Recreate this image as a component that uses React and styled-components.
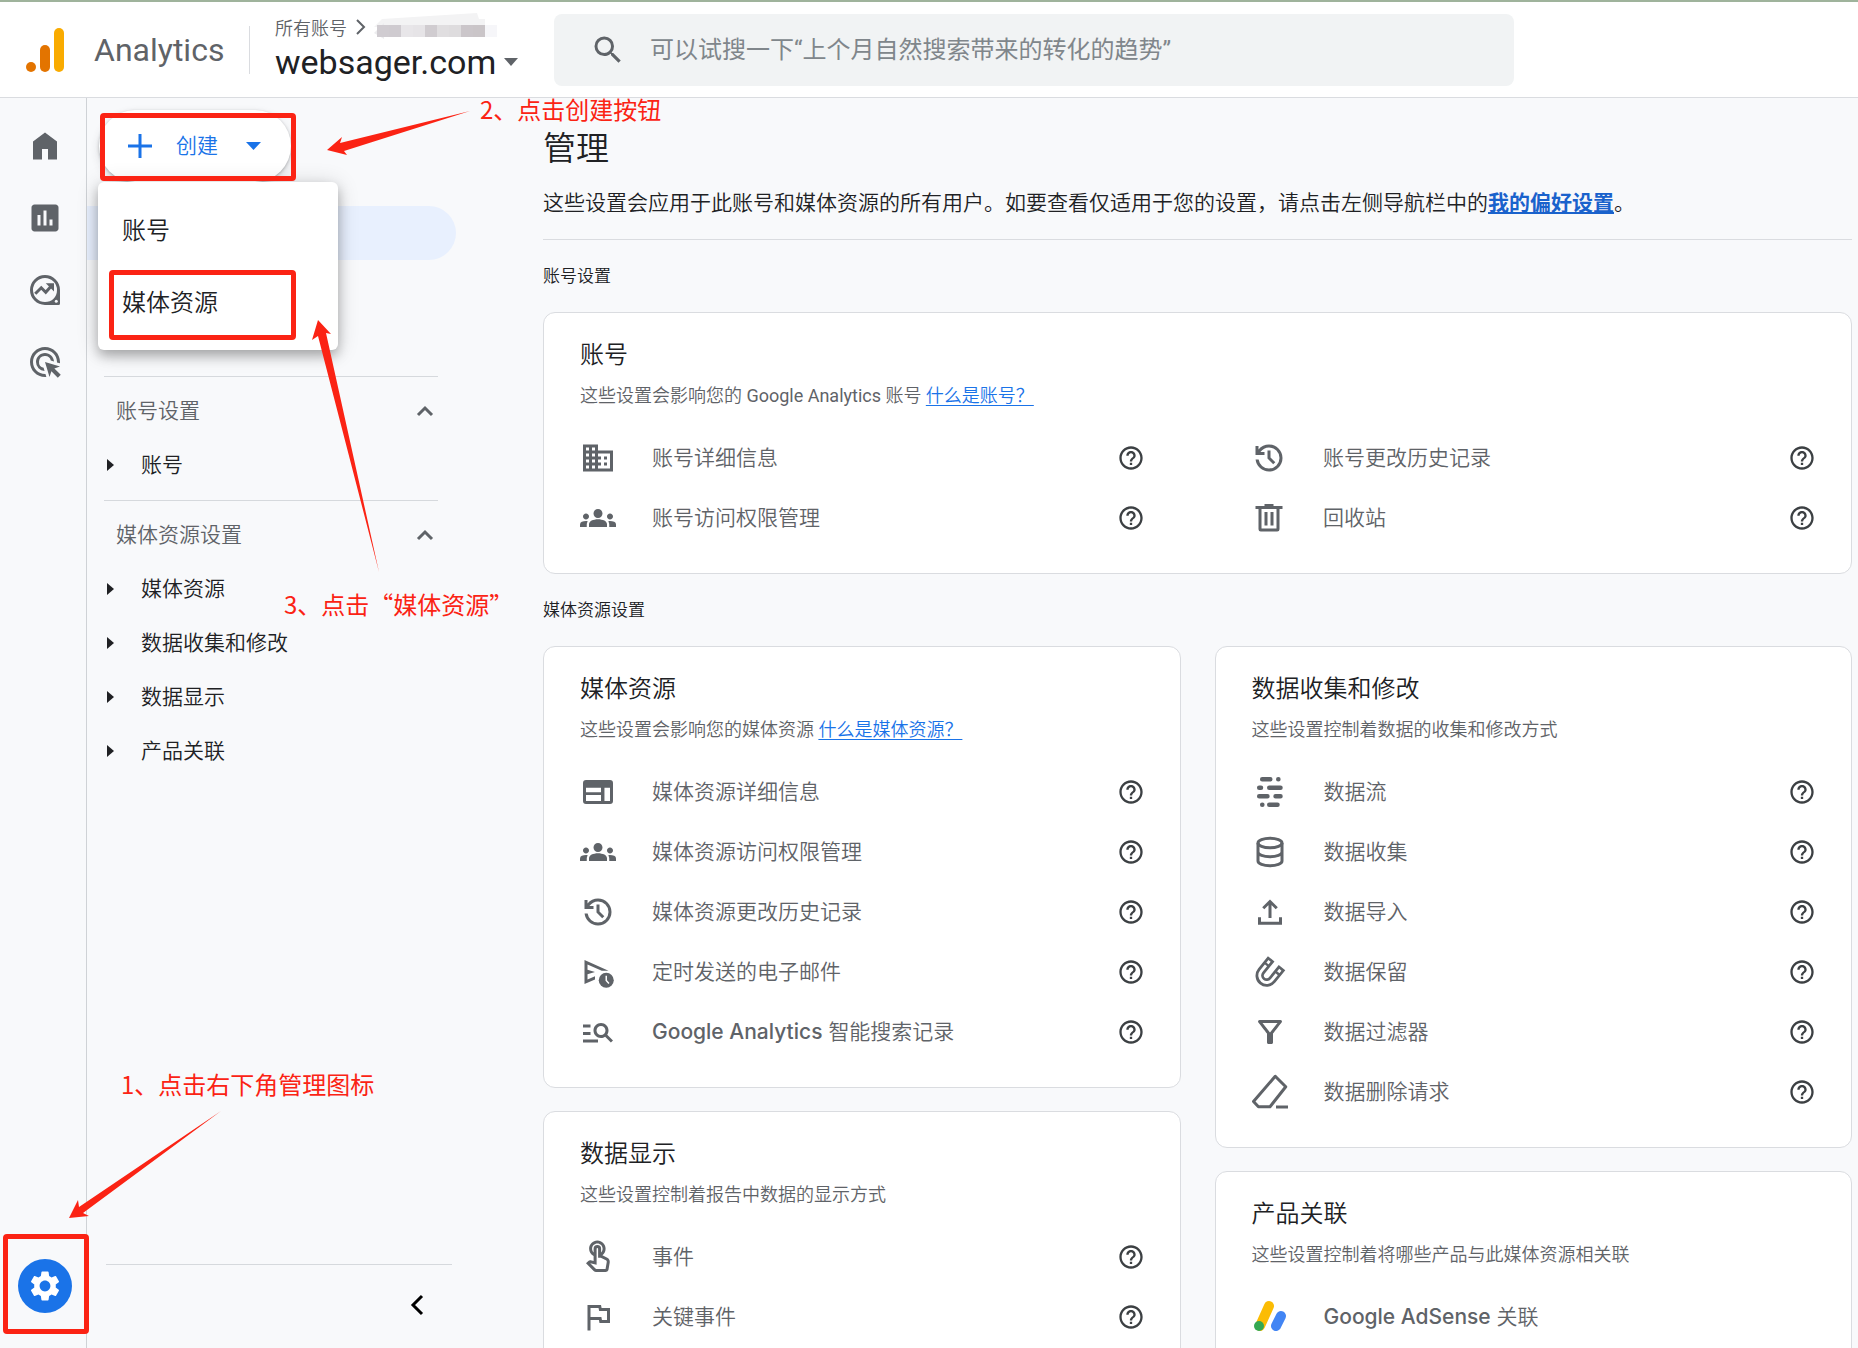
import React from "react";
import styled, { createGlobalStyle } from "styled-components";
import {
  MdAdsClick, MdAssessment, MdBusiness, MdGroups, MdHelpOutline, MdManageSearch,
  MdOutlineFilterAlt, MdOutlineFlag, MdOutlineTouchApp, MdSearch, MdSettings,
} from "react-icons/md";

const cjk = `"Noto Sans CJK SC", sans-serif`;
const body = `Roboto, ${cjk}`;
const display = `Inter, ${cjk}`;
const red = "#fb2314";

const GlobalStyle = createGlobalStyle`
  *, *::before, *::after { box-sizing: border-box; }
  body { margin: 0; background: #f8f9fb; font-family: ${body}; color: #202124; }
  h1, h2, h3, p, ul { margin: 0; padding: 0; font-weight: 400; }
  ul { list-style: none; }
  button { border: 0; padding: 0; background: none; font: inherit; color: inherit; text-align: left; cursor: pointer; }
  svg { display: block; flex: none; }
`;

const Page = styled.div`
  position: relative;
  display: flex;
  flex-direction: column;
  height: 100vh;
  overflow: hidden;
  border-top: 2px solid #9fb39c;
`;

/* ---------- top bar ---------- */

const TopBar = styled.header`
  display: flex;
  align-items: center;
  flex: none;
  height: 96px;
  padding-left: 26px;
  background: #fff;
  border-bottom: 1px solid #dadce0;
`;

const Brand = styled.a`
  display: flex;
  align-items: center;
  gap: 30px;
  height: 48px;
  width: 224px;
  border-right: 1px solid #dadce0;
  color: #5f6368;
  font: 400 32px/40px ${body};
  text-decoration: none;
`;

const Account = styled.div`
  display: flex;
  flex-direction: column;
  width: 304px;
  padding: 0 0 4px 25px;
`;

const Crumb = styled.div`
  display: flex;
  align-items: center;
  gap: 8px;
  height: 28px;
  padding-bottom: 4px;
  color: #5f6368;
  font-size: 18px;
  font-weight: 350;
`;

const PropertyPicker = styled.button`
  display: flex;
  align-items: center;
  gap: 8px;
  color: #202124;
  font: 400 34px/38px ${body};
  & > svg { color: #5f6368; }
`;

const SearchBox = styled.label`
  display: flex;
  align-items: center;
  gap: 24px;
  flex: 0 1 960px;
  height: 72px;
  margin-right: 24px;
  padding: 0 36px;
  border-radius: 8px;
  background: #f1f3f4;
  color: #5f6368;
`;

const SearchInput = styled.input`
  flex: 1;
  min-width: 0;
  border: 0;
  padding: 0;
  outline: 0;
  background: none;
  font: 400 24px/36px ${body};
  color: #202124;
  &::placeholder { color: #80868b; opacity: 1; }
`;

/* ---------- columns ---------- */

const Columns = styled.div`
  display: flex;
  flex: 1;
  min-height: 0;
`;

const Rail = styled.nav`
  display: flex;
  flex-direction: column;
  align-items: center;
  justify-content: space-between;
  flex: none;
  width: 87px;
  padding: 12px 0 26px 3px;
  border-right: 1px solid #cfd2d6;
  color: #5f6368;
`;

const RailGroup = styled.div`
  display: flex;
  flex-direction: column;
`;

const RailButton = styled.button`
  display: grid;
  place-items: center;
  width: 72px;
  height: 72px;
`;

const AdminButton = styled(RailButton)`
  & > span {
    display: grid;
    place-items: center;
    width: 54px;
    height: 54px;
    border-radius: 50%;
    background: #1a73e8;
    color: #fff;
  }
`;

const SidePanel = styled.aside`
  display: flex;
  flex-direction: column;
  flex: none;
  width: 456px;
`;

const CreateArea = styled.div`
  position: relative;
  padding: 12px 12px 0;
`;

const CreateButton = styled.button`
  display: flex;
  align-items: center;
  gap: 20px;
  width: 192px;
  height: 72px;
  padding: 0 25px;
  border-radius: 36px;
  background: #fff;
  box-shadow: 0 1px 3px rgba(60, 64, 67, 0.35), 0 4px 10px rgba(60, 64, 67, 0.16);
  color: #1a73e8;
`;

const CreateMenu = styled.ul`
  position: absolute;
  top: 84px;
  left: 11px;
  z-index: 2;
  width: 240px;
  padding: 12px 0;
  border-radius: 6px;
  background: #fff;
  box-shadow: 0 6px 12px rgba(0, 0, 0, 0.26), 0 2px 22px rgba(0, 0, 0, 0.16);
`;

const CreateMenuItem = styled.button`
  display: block;
  width: 100%;
  padding: 0 24px 3px;
  font: 350 24px/69px ${cjk};
`;

const NavList = styled.div`
  display: flex;
  flex-direction: column;
  flex: 1;
  min-height: 0;
  padding-top: 24px;
`;

const CurrentRow = styled.div`
  width: 369px;
  height: 54px;
  margin-bottom: 116px;
  border-radius: 0 27px 27px 0;
  background: #e8f0fe;
`;

const NavSection = styled.section`
  width: 334px;
  margin-left: 17px;
  padding: 7px 0 8px;
  border-top: 1px solid #d6d9dd;
`;

const NavLabel = styled.span`
  padding-bottom: 4px;
  font: 350 21px/32px ${cjk};
`;

const SectionToggle = styled.button`
  display: flex;
  align-items: center;
  justify-content: space-between;
  width: 100%;
  height: 54px;
  padding: 0 4px 0 12px;
  color: #5f6368;
`;

const TreeItem = styled.button`
  display: flex;
  align-items: center;
  gap: 27px;
  width: 100%;
  height: 54px;
  padding-left: 3px;
`;

const PanelFooter = styled.div`
  display: flex;
  justify-content: flex-end;
  width: 346px;
  margin-left: 19px;
  padding: 22px 17px 25px 0;
  border-top: 1px solid #d6d9dd;
`;

const CollapseButton = styled.button`
  display: grid;
  place-items: center;
  width: 36px;
  height: 36px;
  color: #000;
`;

/* ---------- main ---------- */

const Main = styled.main`
  flex: 1;
  min-width: 0;
  padding: 28px 6px 24px 0;
  overflow: hidden;
`;

const Title = styled.h1`
  font: 350 33px/40px ${cjk};
`;

const Intro = styled.p`
  padding: 23px 0 22px;
  border-bottom: 1px solid #dadce0;
  font-size: 21px;
  font-weight: 350;
  line-height: 28px;
`;

const IntroLink = styled.a`
  color: #1a62cc;
  font-weight: 700;
`;

const GroupLabel = styled.h2`
  margin: 24px 0;
  font-size: 17px;
  font-weight: 350;
  line-height: 24px;
`;

const CardColumns = styled.div`
  display: grid;
  grid-template-columns: 1fr 1fr;
  align-items: start;
  gap: 34px;
`;

const CardStack = styled.div`
  display: flex;
  flex-direction: column;
  gap: 23px;
`;

const Card = styled.section`
  padding: 24px 35px 25px 36px;
  border: 1px solid #dadce0;
  border-radius: 12px;
  background: #fff;
`;

const CardTitle = styled.h3`
  font: 350 24px/32px ${cjk};
`;

const CardText = styled.p`
  margin: 15px 0 20px;
  color: #5f6368;
  font-size: 18px;
  font-weight: 350;
  line-height: 24px;
`;

const HelpLink = styled.a`
  color: #1a73e8;
  text-underline-offset: 3px;
`;

const Rows = styled.ul`
  display: grid;
  grid-template-columns: ${(p) => (p.$split ? "1fr 1fr" : "1fr")};
  column-gap: 106px;
`;

const Row = styled.li`
  display: flex;
  align-items: center;
  height: 60px;
  color: #5f6368;
`;

const RowButton = styled.button`
  display: flex;
  align-items: center;
  flex: 1;
  gap: 36px;
  font: 350 21px/32px ${display};
`;

const ProductName = styled.span`
  font-weight: ${(p) => p.$weight || 500};
`;

const HelpButton = styled.button`
  color: #3c4043;
`;

/* ---------- tutorial marks drawn over the page ---------- */

const MarkLayer = styled.div`
  position: absolute;
  top: -2px;
  left: 0;
  z-index: 3;
  pointer-events: none;
`;

const MarkBox = styled.div`
  position: absolute;
  left: ${(p) => p.$x}px;
  top: ${(p) => p.$y}px;
  width: ${(p) => p.$w}px;
  height: ${(p) => p.$h}px;
  border: 5px solid ${red};
  border-radius: 4px;
`;

const MarkText = styled.p`
  position: absolute;
  left: ${(p) => p.$x}px;
  top: ${(p) => p.$y}px;
  color: ${red};
  font: 400 24px/32px ${cjk};
  white-space: nowrap;
`;

const MarkArrows = styled.svg`
  position: absolute;
  top: 0;
  left: 0;
`;

/* ---------- icons ---------- */

const Icon = ({ children, size = 36 }) => (
  <svg width={size} height={size} viewBox="0 0 24 24" fill="none" stroke="currentColor" strokeWidth="2" aria-hidden="true">
    {children}
  </svg>
);

const Logo = () => (
  <svg width="38" height="44" viewBox="0 0 38 44" aria-hidden="true">
    <rect x="28" y="0" width="10" height="44" rx="5" fill="#f9ab00" />
    <rect x="14" y="17" width="10" height="27" rx="5" fill="#e37400" />
    <circle cx="5" cy="39" r="5" fill="#e37400" />
  </svg>
);

const Home = () => <Icon><path d="M4 21V9l8-6 8 6v12h-6v-7h-4v7z" fill="currentColor" stroke="none" /></Icon>;

const Explore = () => (
  <Icon>
    <path d="M21 12a9 9 0 1 0-9 9" />
    <path d="M5.500 14.500l4-4 3 3 4-4.500" />
    <path d="M12.500 7.500h5.500v5.500z" fill="currentColor" stroke="none" />
    <path d="M20 12c0 5-3.500 8-8 8v2h9a1 1 0 0 0 1-1v-9z" fill="currentColor" stroke="none" />
    <circle cx="19.500" cy="19.500" r="1" fill="#f8f9fb" stroke="none" />
  </Icon>
);

const History = () => (
  <Icon>
    <path fill="currentColor" stroke="none" d="M12 21q-3.450 0-6.013-2.288T3.050 13H5.100q.350 2.600 2.313 4.300T12 19q2.925 0 4.963-2.037T19 12t-2.037-4.962T12 5q-1.725 0-3.225.800T6.250 8H9v2H3V4h2v2.350q1.275-1.600 3.113-2.475T12 3q1.875 0 3.513.713t2.850 1.925 1.925 2.850T21 12t-.713 3.513-1.925 2.850-2.850 1.925T12 21m2.800-4.800L11 12.400V7h2v4.600l3.200 3.200z" />
  </Icon>
);

const WebPanel = () => (
  <Icon>
    <path fill="currentColor" stroke="none" fillRule="evenodd" d="M4 4h16a2 2 0 0 1 2 2v12a2 2 0 0 1-2 2H4a2 2 0 0 1-2-2V6a2 2 0 0 1 2-2zM4 9.200v3h10v-3zM4 14v4h10v-4zM16.300 9.200V18H20V9.200z" />
  </Icon>
);

const Trash = () => (
  <Icon>
    <path d="M3 5h18M9 3.700h6" />
    <path d="M6 5v14.500a.5.5 0 0 0 .5.5h11a.5.5 0 0 0 .5-.5V5" />
    <path d="M10 8v9M14 8v9" strokeWidth="2" />
  </Icon>
);

const ScheduledSend = () => (
  <Icon>
    <path d="M3 4v16l7-3v-2.200l-5 2.200v-3.500l5-1.500-5-1.500V7l9.500 4.100h4.500z" fill="currentColor" stroke="none" />
    <circle cx="17.500" cy="17.500" r="5" fill="currentColor" stroke="none" />
    <path d="M17.500 14.500v3.200l1.800 1.900" stroke="#fff" strokeWidth="1" />
  </Icon>
);

const Stream = () => (
  <Icon>
    <g strokeWidth="3" strokeLinecap="round">
      <path d="M6.800 3.500h5.400M17.500 3.500h.1M4.800 9.200h1.200M11.500 9.200h7.500M4.800 14.800h5.500M15.700 14.800h3.300M6.800 20.500h.1M11.500 20.500h5.500" />
    </g>
  </Icon>
);

const Database = () => (
  <Icon>
    <ellipse cx="12" cy="6" rx="8" ry="3.200" />
    <path d="M4 6v12c0 1.800 3.600 3.200 8 3.200s8-1.400 8-3.200V6M4 12c0 1.800 3.600 3.200 8 3.200s8-1.400 8-3.200" />
  </Icon>
);

const Upload = () => <Icon><path d="M12 16V5M7.500 9.500L12 5l4.500 4.500M5 15.500V19.500h14v-4" /></Icon>;

const Magnet = () => (
  <Icon>
    <g strokeLinejoin="round">
      <path strokeWidth="5.600" d="M12.800 3.200L6.200 11.400a4.650 4.650 0 0 0 7.200 5.900L20 9.100" />
      <path strokeWidth="1.900" stroke="#fff" d="M11.700 4.600L6.200 11.400a4.650 4.650 0 0 0 7.200 5.900L18.900 10.500" />
    </g>
    <path strokeWidth="1.600" d="M8.200 5.600l3 2.500M15.400 11.500l3 2.500" />
  </Icon>
);

const Eraser = () => (
  <Icon>
    <path strokeLinejoin="round" d="M15.500 1.500l7 7-10.500 13.300H4.300L1 18.300z" />
    <path d="M16 22h8" />
  </Icon>
);

const AdSense = () => (
  <svg width="36" height="36" viewBox="0 0 36 36" aria-hidden="true">
    <g strokeLinecap="round" strokeWidth="10">
      <path d="M8 27L17 7" stroke="#fbbc04" />
      <path d="M24 27L29 17" stroke="#4285f4" />
      <path d="M7 27h.01" stroke="#34a853" />
    </g>
  </svg>
);

const Caret = ({ width = 14, height = 8, d = "M0 0h14L7 8z" }) => (
  <svg width={width} height={height} viewBox={`0 0 ${width} ${height}`} fill="currentColor" aria-hidden="true"><path d={d} /></svg>
);

const ChevronUp = () => (
  <svg width="18" height="12" viewBox="0 0 18 12" fill="none" stroke="currentColor" strokeWidth="3" aria-hidden="true">
    <path d="M2 10l7-7 7 7" />
  </svg>
);

const Redacted = () => (
  <svg width="124" height="28" viewBox="0 0 124 28" aria-hidden="true">
    <path d="M8 6l95-6 2 6h6v8H0z" fill="#f3f3f4" />
    <path d="M0 20l10-10v16z" fill="#ececee" />
    {["#d0ccd1", "#cfcbd0", "#e8e6e9", "#e6e4e7", "#d0ccd0", "#e0dee0", "#dedcde", "#cbc6ca", "#cac5c8"].map((c, i) => (
      <rect key={i} x={3 + i * 12} y="12" width="12" height="12" fill={c} />
    ))}
    <rect x="111" y="12" width="12" height="12" fill="#f6f6f9" />
  </svg>
);

const md = (Component) => <Component size={36} aria-hidden="true" />;

/* ---------- content ---------- */

const accountRows = [
  [md(MdBusiness), "账号详细信息"],
  [<History />, "账号更改历史记录"],
  [md(MdGroups), "账号访问权限管理"],
  [<Trash />, "回收站"],
];

const propertyRows = [
  [<WebPanel />, "媒体资源详细信息"],
  [md(MdGroups), "媒体资源访问权限管理"],
  [<History />, "媒体资源更改历史记录"],
  [<ScheduledSend />, "定时发送的电子邮件"],
  [md(MdManageSearch), " 智能搜索记录", "Google Analytics"],
];

const displayRows = [
  [md(MdOutlineTouchApp), "事件"],
  [md(MdOutlineFlag), "关键事件"],
];

const dataRows = [
  [<Stream />, "数据流"],
  [<Database />, "数据收集"],
  [<Upload />, "数据导入"],
  [<Magnet />, "数据保留"],
  [md(MdOutlineFilterAlt), "数据过滤器"],
  [<Eraser />, "数据删除请求"],
];

const linkRows = [[<AdSense />, " 关联", "Google AdSense"]];

const navSections = [
  ["账号设置", ["账号"]],
  ["媒体资源设置", ["媒体资源", "数据收集和修改", "数据显示", "产品关联"]],
];

function SettingsCard({ title, text, link, rows, split, noHelp }) {
  return (
    <Card>
      <CardTitle>{title}</CardTitle>
      <CardText>
        {text}
        {link && <> <HelpLink href="#help">{link}</HelpLink></>}
      </CardText>
      <Rows $split={split}>
        {rows.map(([icon, label, product]) => (
          <Row key={label}>
            <RowButton type="button">
              {icon}
              <span>{product && <ProductName>{product}</ProductName>}{label}</span>
            </RowButton>
            {!noHelp && (
              <HelpButton type="button" aria-label="帮助"><MdHelpOutline size={28} /></HelpButton>
            )}
          </Row>
        ))}
      </Rows>
    </Card>
  );
}

export default function App() {
  return (
    <Page lang="zh-CN">
      <GlobalStyle />
      <TopBar>
        <Brand href="#home"><Logo />Analytics</Brand>
        <Account>
          <Crumb>
            所有账号
            <svg width="11" height="18" viewBox="0 0 11 18" fill="none" stroke="currentColor" strokeWidth="2" aria-hidden="true"><path d="M2 2l7 7-7 7" /></svg>
            <Redacted />
          </Crumb>
          <PropertyPicker type="button">websager.com<Caret /></PropertyPicker>
        </Account>
        <SearchBox>
          <MdSearch size={36} aria-hidden="true" />
          <SearchInput type="text" aria-label="搜索" placeholder="可以试搜一下“上个月自然搜索带来的转化的趋势”" />
        </SearchBox>
      </TopBar>

      <Columns>
        <Rail>
          <RailGroup>
            <RailButton type="button" aria-label="首页"><Home /></RailButton>
            <RailButton type="button" aria-label="报告">{md(MdAssessment)}</RailButton>
            <RailButton type="button" aria-label="探索"><Explore /></RailButton>
            <RailButton type="button" aria-label="广告">{md(MdAdsClick)}</RailButton>
          </RailGroup>
          <AdminButton type="button" aria-label="管理"><span>{md(MdSettings)}</span></AdminButton>
        </Rail>

        <SidePanel>
          <CreateArea>
            <CreateButton type="button">
              <svg width="32" height="28" viewBox="0 0 32 28" stroke="currentColor" strokeWidth="3" aria-hidden="true"><path d="M4 14h24M16 2v24" /></svg>
              <NavLabel>创建</NavLabel>
              <svg width="26" height="8" viewBox="0 0 26 8" fill="currentColor" aria-hidden="true"><path d="M8 0h15l-7.500 8z" /></svg>
            </CreateButton>
            <CreateMenu>
              <li><CreateMenuItem type="button">账号</CreateMenuItem></li>
              <li><CreateMenuItem type="button">媒体资源</CreateMenuItem></li>
            </CreateMenu>
          </CreateArea>
          <NavList>
            <CurrentRow />
            {navSections.map(([title, items]) => (
              <NavSection key={title}>
                <SectionToggle type="button"><NavLabel>{title}</NavLabel><ChevronUp /></SectionToggle>
                {items.map((item) => (
                  <TreeItem type="button" key={item}><Caret width={7} height={12} d="M0 0l7 6-7 6z" /><NavLabel>{item}</NavLabel></TreeItem>
                ))}
              </NavSection>
            ))}
          </NavList>
          <PanelFooter>
            <CollapseButton type="button" aria-label="收起">
              <svg width="14" height="22" viewBox="0 0 14 22" fill="none" stroke="currentColor" strokeWidth="3" aria-hidden="true"><path d="M12 2l-9 9 9 9" /></svg>
            </CollapseButton>
          </PanelFooter>
        </SidePanel>

        <Main>
          <Title>管理</Title>
          <Intro>
            这些设置会应用于此账号和媒体资源的所有用户。如要查看仅适用于您的设置，请点击左侧导航栏中的<IntroLink href="#preferences">我的偏好设置</IntroLink>。
          </Intro>
          <GroupLabel>账号设置</GroupLabel>
          <SettingsCard
            title="账号"
            text={<>这些设置会影响您的 <ProductName $weight={400}>Google Analytics</ProductName> 账号</>}
            link="什么是账号？"
            rows={accountRows}
            split
          />
          <GroupLabel>媒体资源设置</GroupLabel>
          <CardColumns>
            <CardStack>
              <SettingsCard title="媒体资源" text="这些设置会影响您的媒体资源" link="什么是媒体资源？" rows={propertyRows} />
              <SettingsCard title="数据显示" text="这些设置控制着报告中数据的显示方式" rows={displayRows} />
            </CardStack>
            <CardStack>
              <SettingsCard title="数据收集和修改" text="这些设置控制着数据的收集和修改方式" rows={dataRows} />
              <SettingsCard title="产品关联" text="这些设置控制着将哪些产品与此媒体资源相关联" rows={linkRows} noHelp />
            </CardStack>
          </CardColumns>
        </Main>
      </Columns>

      <MarkLayer>
        <MarkBox $x={100} $y={113} $w={196} $h={68} />
        <MarkBox $x={109} $y={270} $w={187} $h={70} />
        <MarkBox $x={3} $y={1234} $w={86} $h={100} />
        <MarkArrows width="500" height="1240" viewBox="0 0 500 1240" fill={red} aria-hidden="true">
          <path d="M327 150l15-13-2 6 130-32-126 40 3 4z" />
          <path d="M318 320l-6 20 6-4 61 236-53-239 5 1z" />
          <path d="M69 1218l9-18 1 7 142-96-138 102 6 3z" />
        </MarkArrows>
        <MarkText $x={121} $y={1068}>1、点击右下角管理图标</MarkText>
        <MarkText $x={480} $y={93}>2、点击创建按钮</MarkText>
        <MarkText $x={284} $y={588}>3、点击“媒体资源”</MarkText>
      </MarkLayer>
    </Page>
  );
}
